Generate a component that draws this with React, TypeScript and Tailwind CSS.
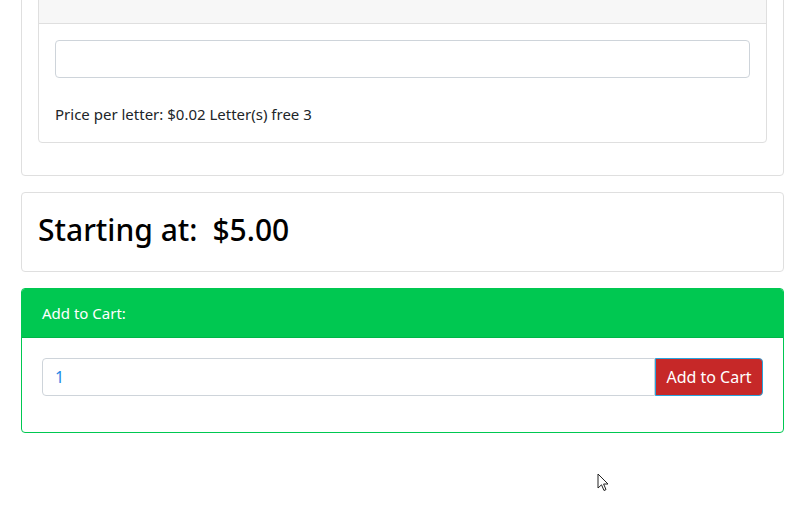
import React, { useState } from "react";

const font = { fontFamily: '"Noto Sans", "Open Sans", sans-serif' };

const ProductOptions: React.FC = () => {
  const [engraving, setEngraving] = useState("");
  const [qty, setQty] = useState("1");

  return (
    <div className="relative min-h-[508px] bg-white text-[#212529] overflow-hidden" style={font}>
      <div className="ml-[21px] w-[763px] mt-[-43px] flex flex-col gap-4">
        {/* engraving options */}
        <div className="border border-[#dfdfdf] rounded px-4 pt-4 pb-8">
          <div className="border border-[#dfdfdf] rounded">
            <div className="h-[49px] bg-[#f7f7f7] border-b border-[#dfdfdf]" />
            <div className="p-4">
              <input
                value={engraving}
                onChange={(e) => setEngraving(e.target.value)}
                className="block w-full h-[38px] border border-[#ced4da] rounded px-3 outline-none"
              />
              <p className="mt-6 text-[15px] leading-6">Price per letter: $0.02 Letter(s) free 3</p>
            </div>
          </div>
        </div>

        {/* price */}
        <div className="border border-[#dfdfdf] rounded px-4 pt-[14px] pb-[18px]">
          <h2 className="text-[30px] leading-[46px] font-medium flex gap-[15px] text-black">
            <span>Starting at:</span>
            <span>$5.00</span>
          </h2>
        </div>

        {/* add to cart */}
        <div className="border border-[#00c851] rounded overflow-hidden">
          <div className="bg-[#00c851] text-white px-5 py-3 leading-6 text-[15px] border-b border-[#00b548]">
            Add to Cart:
          </div>
          <div className="px-5 pt-5 pb-9">
            <div className="flex">
              <input
                value={qty}
                onChange={(e) => setQty(e.target.value)}
                className="flex-1 h-[38px] border border-[#ced4da] rounded-l px-3 text-[#1e88e5] outline-none"
              />
              <button className="h-[38px] w-[108px] bg-[#c62828] text-white border border-[#29a3dc] rounded-r text-[16px]">
                Add to Cart
              </button>
            </div>
          </div>
        </div>
      </div>

      {/* mouse pointer */}
      <svg className="absolute left-[597px] top-[473px]" width="13" height="20" viewBox="0 0 13 20">
        <path d="M1 1 L1 15 L4.5 11.8 L7 17.5 L9 16.6 L6.6 11 L11 11 Z" fill="white" stroke="#222" strokeWidth="1" strokeLinejoin="round" />
      </svg>
    </div>
  );
};

export default function App() {
  return <ProductOptions />;
}
